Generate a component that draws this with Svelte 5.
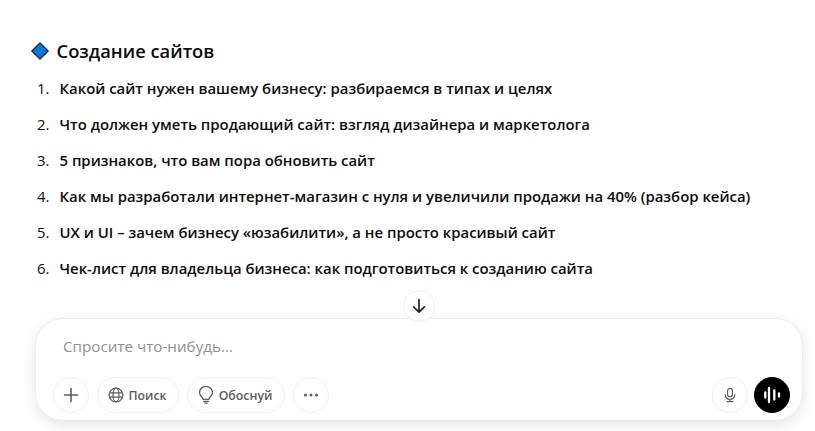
<script>
  const items = [
    'Какой сайт нужен вашему бизнесу: разбираемся в типах и целях',
    'Что должен уметь продающий сайт: взгляд дизайнера и маркетолога',
    '5 признаков, что вам пора обновить сайт',
    'Как мы разработали интернет-магазин с нуля и увеличили продажи на 40% (разбор кейса)',
    'UX и UI – зачем бизнесу «юзабилити», а не просто красивый сайт',
    'Чек-лист для владельца бизнеса: как подготовиться к созданию сайта'
  ];
</script>

<div class="page">
  <section class="answer">
    <h3>
      <svg class="diamond" width="18" height="18" viewBox="0 0 18 18">
        <path d="M9 .8 17.2 9 9 17.2.8 9Z" fill="#0a78d7" stroke="#14202c" stroke-width="1.2" stroke-linejoin="round" />
      </svg>
      Создание сайтов
    </h3>
    <ol>
      {#each items as item, i}
        <li><span class="num">{i + 1}.</span><strong>{item}</strong></li>
      {/each}
    </ol>
  </section>

  <div class="composer-wrap">
    <button class="scroll-down" aria-label="Вниз">
      <svg width="18" height="18" viewBox="0 0 18 18" fill="none" stroke="#222" stroke-width="1.7" stroke-linecap="round" stroke-linejoin="round">
        <path d="M9 2.5v12.5M3.6 9.8 9 15.2l5.4-5.4" />
      </svg>
    </button>
    <div class="composer">
      <div class="placeholder">Спросите что-нибудь...</div>
      <div class="tools">
        <div class="group">
          <button class="round" aria-label="Добавить">
            <svg width="18" height="18" viewBox="0 0 18 18" fill="none" stroke="#5d5d5d" stroke-width="1.6" stroke-linecap="round">
              <path d="M9 2.5v13M2.5 9h13" />
            </svg>
          </button>
          <button class="pill search">
            <svg width="16" height="16" viewBox="0 0 16 16" fill="none" stroke="#5d5d5d" stroke-width="1.2">
              <circle cx="8" cy="8" r="6.9" />
              <ellipse cx="8" cy="8" rx="3" ry="6.9" />
              <path d="M1.2 5.8h13.6M1.2 10.2h13.6" />
            </svg>
            Поиск
          </button>
          <button class="pill reason">
            <svg width="16" height="18" viewBox="0 0 16 18" fill="none" stroke="#5d5d5d" stroke-width="1.3" stroke-linecap="round" stroke-linejoin="round">
              <path d="M5.2 13.4c0-2-3.7-3.4-3.7-7A6.5 6 0 0 1 14.5 6.400c0 3.600-3.700 5-3.700 7Z" />
              <path d="M5.600 15.400h4.800M6.800 17.200h2.400" />
            </svg>
            Обоснуй
          </button>
          <button class="round" aria-label="Ещё">
            <svg width="18" height="18" viewBox="0 0 18 18" fill="#5d5d5d">
              <circle cx="3.500" cy="9" r="1.500" />
              <circle cx="9" cy="9" r="1.500" />
              <circle cx="14.500" cy="9" r="1.500" />
            </svg>
          </button>
        </div>
        <div class="group right">
          <button class="round" aria-label="Микрофон">
            <svg width="16" height="16" viewBox="0 0 18 18" fill="none" stroke="#5d5d5d" stroke-width="1.300" stroke-linecap="round">
              <rect x="6.300" y="1.500" width="5.400" height="9.500" rx="2.700" />
              <path d="M3.500 8.500a5.500 5.500 0 0 0 11 0M9 14v2.500M5.800 16.500h6.400" />
            </svg>
          </button>
          <button class="round voice" aria-label="Голосовой режим">
            <svg width="18" height="18" viewBox="0 0 18 18" fill="none" stroke="#fff" stroke-width="2.300" stroke-linecap="round">
              <path d="M2.300 6.500v5M6 2v14M11.300 4.500v9M16 7.500v3" />
            </svg>
          </button>
        </div>
      </div>
    </div>
  </div>
</div>

<style>
  :global(body) {
    margin: 0;
    background: #fff;
  }

  .page {
    width: 815px;
    height: 431px;
    overflow: hidden;
    font-family: "Open Sans", "Noto Sans", sans-serif;
    color: #0d0d0d;
    box-sizing: border-box;
    padding-top: 39px;
  }

  .answer {
    padding-left: 31px;
  }

  h3 {
    margin: 0;
    display: flex;
    align-items: center;
    gap: 7.500px;
    font-size: 18.350px;
    line-height: 24px;
    font-weight: 600;
  }

  .diamond {
    flex: none;
  }

  ol {
    list-style: none;
    margin: 7px 0 0;
    padding: 0 0 0 6px;
  }

  li {
    display: flex;
    height: 36px;
    align-items: center;
    font-size: 14.900px;
  }

  .num {
    width: 22.500px;
    flex: none;
  }

  strong {
    font-weight: 600;
    white-space: nowrap;
  }

  .composer-wrap {
    position: relative;
    margin: 32px 12px 0 35px;
  }

  .scroll-down {
    position: absolute;
    left: 368px;
    top: -28px;
    width: 32px;
    height: 32px;
    padding: 0;
    border-radius: 50%;
    border: 1px solid #efefef;
    background: #fff;
    display: flex;
    align-items: center;
    justify-content: center;
  }

  .composer {
    height: 103px;
    box-sizing: border-box;
    border: 1px solid #ededed;
    border-radius: 28px;
    background: #fff;
    box-shadow: 0 4px 14px rgba(0, 0, 0, 0.1);
    padding: 17px 12px 7px 17px;
    display: flex;
    flex-direction: column;
    justify-content: space-between;
  }

  .placeholder {
    padding-left: 10px;
    font-size: 15.200px;
    line-height: 20px;
    color: #8f8f8f;
  }

  .tools {
    display: flex;
    justify-content: space-between;
  }

  .group {
    display: flex;
    gap: 8px;
  }

  .group.right {
    gap: 6px;
  }

  button {
    box-sizing: border-box;
    height: 36px;
    border: 1px solid #efefef;
    background: #fff;
    padding: 0;
    font: inherit;
    display: flex;
    align-items: center;
    justify-content: center;
  }

  .round {
    width: 36px;
    border-radius: 50%;
  }

  .pill {
    border-radius: 18px;
    gap: 5px;
    font-size: 12.300px;
    font-weight: 600;
    color: #5d5d5d;
  }

  .search {
    width: 82px;
    padding-right: 2px;
  }

  .reason {
    width: 98px;
    padding-right: 2px;
  }

  .voice {
    background: #000;
    border-color: #000;
  }
</style>
